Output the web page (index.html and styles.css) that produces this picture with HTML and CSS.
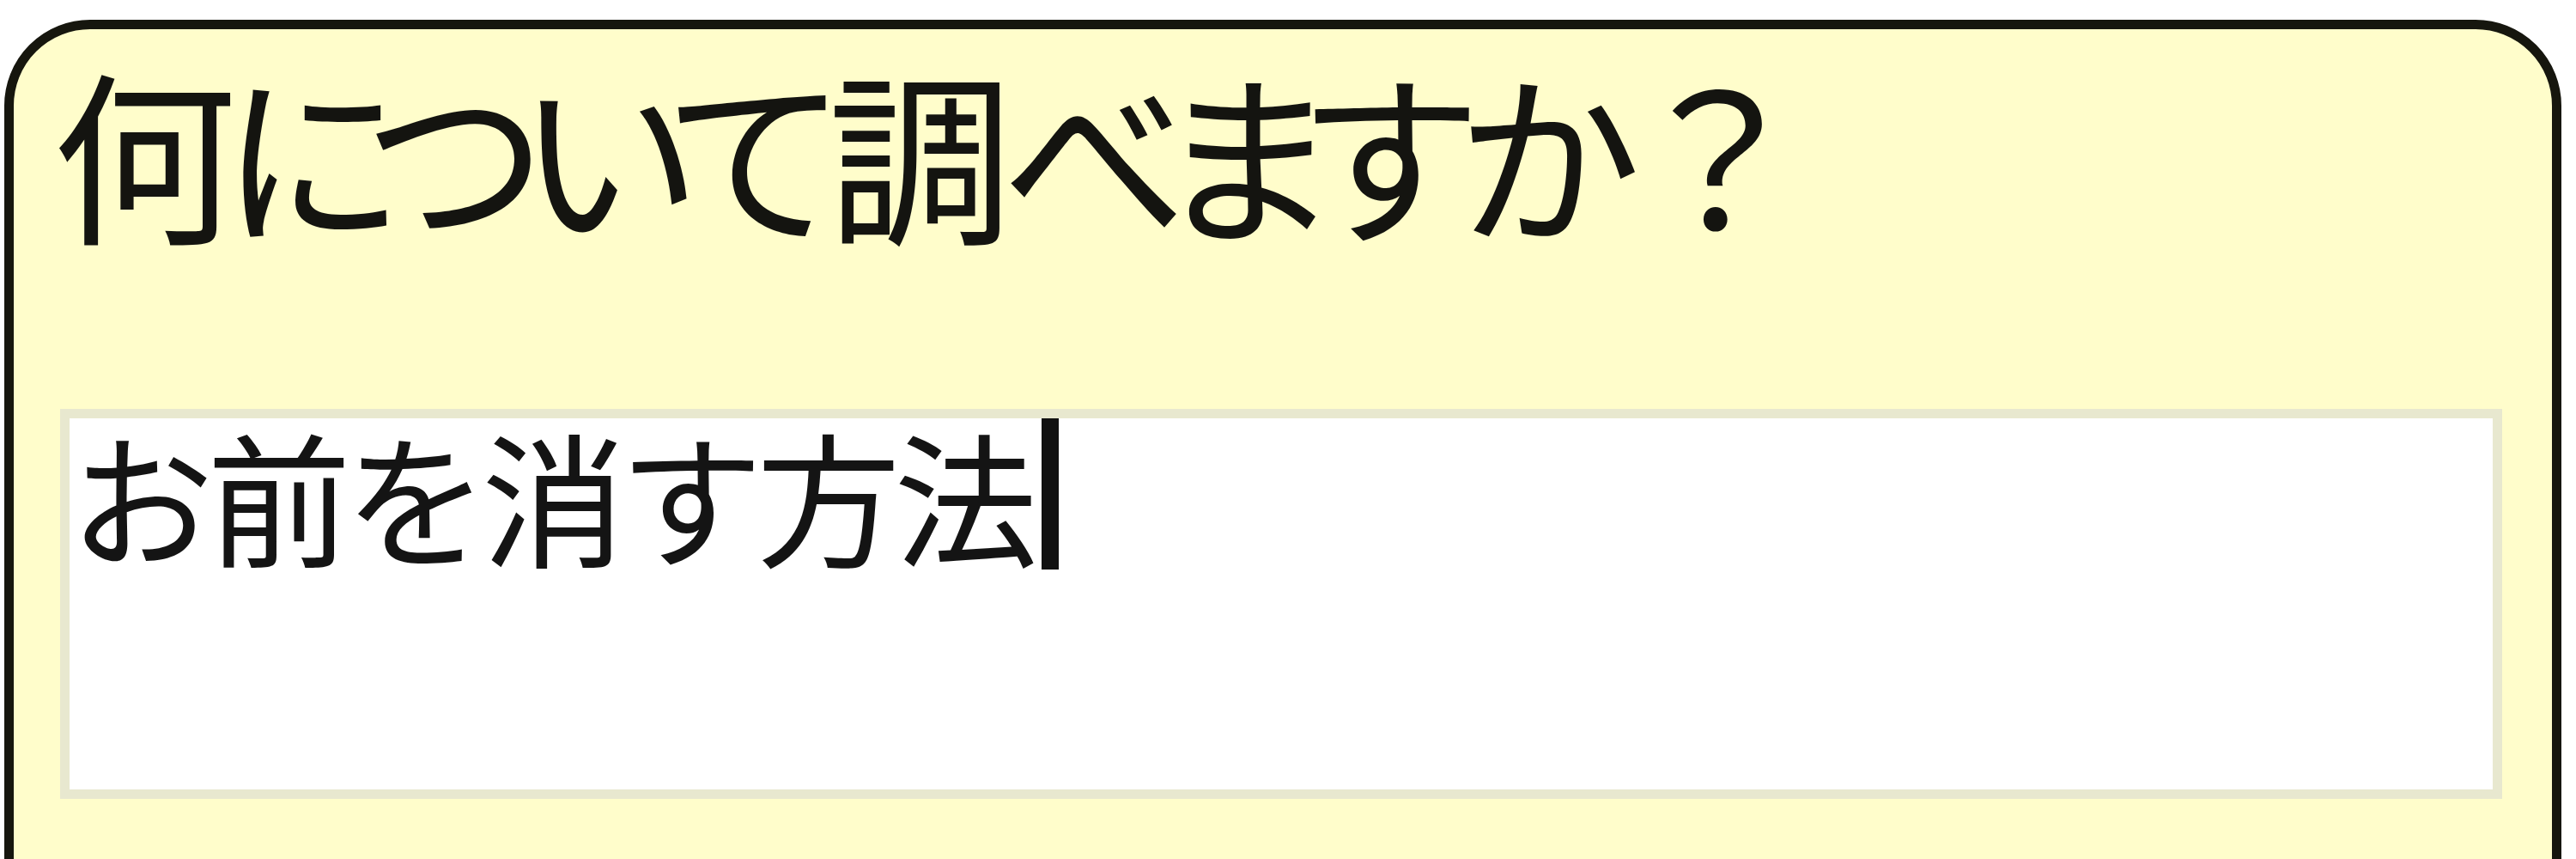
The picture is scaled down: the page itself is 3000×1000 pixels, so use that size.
FILE: index.html
```html
<!DOCTYPE html>
<html lang="ja">
<head>
<meta charset="utf-8">
<title>何について調べますか？</title>
<link rel="stylesheet" href="styles.css">
</head>
<body>
<div class="balloon">
  <div class="question" aria-label="何について調べますか？"><span class="ch w225">何</span><span class="ch w163">に</span><span class="ch w172">つ</span><span class="ch w182">い</span><span class="ch w163">て</span><span class="ch w221">調</span><span class="ch w184">べ</span><span class="ch w170">ま</span><span class="ch w168">す</span><span class="ch w200">か</span><span class="ch w190">？</span></div>
  <div class="field">
    <span class="query">お前を消す方法</span><span class="caret"></span>
  </div>
</div>
</body>
</html>
```
FILE: styles.css
```css
html, body {
  margin: 0;
  padding: 0;
  background: #ffffff;
  overflow: hidden;
}

body {
  width: 3000px;
  height: 1000px;
}

.balloon {
  box-sizing: border-box;
  margin: 23px 17px 0 5px;
  height: 1100px;
  background: #fffdcb;
  border: 11px solid #16160e;
  border-radius: 100px 100px 0 0;
  padding: 28px 58px 0 40px;
  display: flex;
  flex-direction: column;
}

.question {
  display: flex;
  font-family: "Noto Sans CJK JP", sans-serif;
  font-size: 215px;
  line-height: 225px;
  height: 225px;
  color: #141410;
  font-feature-settings: "palt" 1;
  white-space: nowrap;
}

.ch {
  display: flex;
  justify-content: center;
  flex: none;
}

.w163 { width: 163px; }
.w168 { width: 168px; }
.w170 { width: 170px; }
.w172 { width: 172px; }
.w182 { width: 182px; }
.w184 { width: 184px; }
.w190 { width: 190px; }
.w200 { width: 200px; }
.w221 { width: 221px; }
.w225 { width: 225px; }

.field {
  margin: 189px 0 0 14px;
  height: 454px;
  box-sizing: border-box;
  background: #ffffff;
  border: 11px solid #e8e8cf;
  display: flex;
  align-items: flex-start;
}

.query {
  font-family: "Noto Sans CJK JP", sans-serif;
  font-size: 168px;
  line-height: 176px;
  letter-spacing: -8px;
  color: #141414;
  white-space: nowrap;
}

.caret {
  width: 20px;
  height: 176px;
  background: #111111;
  margin-left: 12px;
}
```
